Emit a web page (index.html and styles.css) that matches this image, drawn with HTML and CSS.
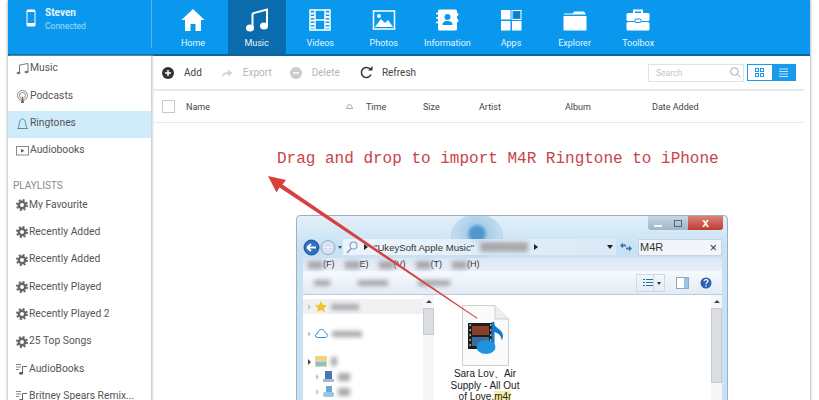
FILE: index.html
```html
<!DOCTYPE html>
<html lang="en">
<head>
    <meta charset="UTF-8">
    <meta name="viewport" content="width=device-width, initial-scale=1.0">
    <title>Ringtones</title>
    <link rel="stylesheet" href="styles.css">
</head>
<body>
    <svg class="defs" width="0" height="0">
        <symbol id="gear" viewBox="0 0 12 12">
            <circle cx="6" cy="6" r="3.200" fill="none" stroke="#666" stroke-width="2.400"/>
            <circle cx="6" cy="6" r="5" fill="none" stroke="#666" stroke-width="2" stroke-dasharray="2 1.930"/>
        </symbol>
        <symbol id="note-list" viewBox="0 0 12 12">
            <path d="M0 1.500h5M0 4h5M0 6.500h3" stroke="#888" fill="none"/>
            <path d="M6.500 3.500H11M6.500 3.500V10" stroke="#666" fill="none"/>
            <ellipse cx="5" cy="10.300" rx="2" ry="1.400" fill="#555"/>
        </symbol>
    </svg>

    <div class="app">
        <!-- Top bar -->
        <header class="topbar">
            <div class="device">
                <svg class="phone" width="10" height="18" viewBox="0 0 10 18"><rect x="0.500" y="0.500" width="9" height="17" rx="1.500" fill="#fff"/><rect x="1.500" y="3" width="7" height="11" fill="#0a98ee"/></svg>
                <div>
                    <div class="device-name">Steven</div>
                    <div class="device-status">Connected</div>
                </div>
            </div>
            <nav class="tabs">
                <div class="tab">
                    <svg width="24" height="24" viewBox="0 0 24 24"><path d="M12 1L0.500 12H4v11h5.500v-7h5v7H20V12h3.500z" fill="#fff"/></svg>
                    <span>Home</span>
                </div>
                <div class="tab active">
                    <svg width="24" height="24" viewBox="0 0 24 24"><path d="M7.500 5.500L22 1.500v16.500" stroke="#fff" stroke-width="2" fill="none"/><path d="M7.500 5.500V20" stroke="#fff" stroke-width="2" fill="none"/><ellipse cx="5" cy="20" rx="4" ry="3.500" fill="#fff"/><ellipse cx="19" cy="18" rx="4" ry="3.500" fill="#fff"/></svg>
                    <span>Music</span>
                </div>
                <div class="tab">
                    <svg width="24" height="24" viewBox="0 0 24 24"><rect x="2" y="2" width="20" height="20" fill="none" stroke="#fff" stroke-width="1.500"/><path d="M7 2v20M17 2v20M7 12h10" stroke="#fff" stroke-width="1.500"/><path d="M2.500 5.500h4M2.500 9h4M2.500 12.500h4M2.500 16h4M2.500 19.500h4M17.500 5.500h4M17.500 9h4M17.500 12.500h4M17.500 16h4M17.500 19.500h4" stroke="#fff" stroke-width="2"/></svg>
                    <span>Videos</span>
                </div>
                <div class="tab">
                    <svg width="24" height="24" viewBox="0 0 24 24"><rect x="1.500" y="3" width="21" height="18" fill="none" stroke="#fff" stroke-width="1.500"/><path d="M3 19l6-8 4 4 3-3 5 7z" fill="#fff"/><circle cx="7" cy="8" r="2" fill="#fff"/></svg>
                    <span>Photos</span>
                </div>
                <div class="tab">
                    <svg width="24" height="24" viewBox="0 0 24 24"><rect x="3" y="1.500" width="19" height="21" rx="1.500" fill="#fff"/><circle cx="12.500" cy="9" r="3" fill="#0a98ee"/><path d="M7.500 17c0-3 2-4 5-4s5 1 5 4z" fill="#0a98ee"/><path d="M1 5.500h3M1 10h3M1 14.500h3" stroke="#fff" stroke-width="1.500"/><path d="M22.500 5v3M22.500 11v3" stroke="#fff" stroke-width="1.500"/></svg>
                    <span>Information</span>
                </div>
                <div class="tab">
                    <svg width="24" height="24" viewBox="0 0 24 24"><rect x="2" y="2" width="9.500" height="9.500" fill="#fff"/><rect x="13" y="2.500" width="9" height="9" fill="none" stroke="#fff"/><rect x="14.500" y="3.500" width="6.500" height="6.500" fill="#0a7fcc"/><rect x="2" y="13" width="9.500" height="9.500" fill="#fff"/><rect x="13" y="13" width="9.500" height="9.500" fill="#fff"/></svg>
                    <span>Apps</span>
                </div>
                <div class="tab">
                    <svg width="24" height="24" viewBox="0 0 24 24"><path d="M1 5.500h8.500l2-2h9.500l2 3H1z" fill="#fff"/><path d="M0.500 8h23v14.500H0.500z" fill="#fff"/></svg>
                    <span>Explorer</span>
                </div>
                <div class="tab">
                    <svg width="24" height="24" viewBox="0 0 24 24"><path d="M8 5V2.500h8V5" fill="none" stroke="#fff" stroke-width="2"/><rect x="0.500" y="5" width="23" height="8" rx="1.500" fill="#fff"/><rect x="0.500" y="14" width="23" height="8.500" rx="1.500" fill="#fff"/><rect x="9" y="11" width="6" height="3.500" rx="1" fill="#fff" stroke="#0a98ee"/></svg>
                    <span>Toolbox</span>
                </div>
            </nav>
        </header>

        <div class="body-row">
            <!-- Sidebar -->
            <aside class="sidebar">
                <div class="side-item">
                    <svg width="13" height="13" viewBox="0 0 13 13"><path d="M3.500 3L12 1.500V10M3.500 3v8" stroke="#777" fill="none"/><ellipse cx="2.500" cy="11" rx="2" ry="1.300" fill="#777"/><ellipse cx="10.500" cy="10" rx="2" ry="1.300" fill="#777"/></svg>
                    <span class="side-label">Music</span>
                </div>
                <div class="side-item">
                    <svg width="13" height="13" viewBox="0 0 13 13"><circle cx="6.500" cy="5.500" r="5" fill="none" stroke="#888"/><circle cx="6.500" cy="5.500" r="3" fill="none" stroke="#888"/><path d="M5 13l1.500-7.500L8 13z" fill="#666"/></svg>
                    <span class="side-label">Podcasts</span>
                </div>
                <div class="side-item selected">
                    <svg width="13" height="13" viewBox="0 0 13 13"><path d="M1.500 11.500c1.500-1 1.500-3 2-6 .4-2.500 1.500-3.500 3-3.500s2.600 1 3 3.500c.5 3 .5 5 2 6z" fill="none" stroke="#5a8a9a"/></svg>
                    <span class="side-label">Ringtones</span>
                </div>
                <div class="side-item">
                    <svg width="13" height="13" viewBox="0 0 13 13"><rect x="0.500" y="2.500" width="12" height="8.500" fill="none" stroke="#888"/><path d="M5 5l3.500 1.800L5 8.500z" fill="#555"/></svg>
                    <span class="side-label">Audiobooks</span>
                </div>
                <div class="side-title">PLAYLISTS</div>
                <div class="side-item"><svg width="12" height="12"><use href="#gear"/></svg><span class="side-label">My Favourite</span></div>
                <div class="side-item"><svg width="12" height="12"><use href="#gear"/></svg><span class="side-label">Recently Added</span></div>
                <div class="side-item"><svg width="12" height="12"><use href="#gear"/></svg><span class="side-label">Recently Added</span></div>
                <div class="side-item"><svg width="12" height="12"><use href="#gear"/></svg><span class="side-label">Recently Played</span></div>
                <div class="side-item"><svg width="12" height="12"><use href="#gear"/></svg><span class="side-label">Recently Played 2</span></div>
                <div class="side-item"><svg width="12" height="12"><use href="#gear"/></svg><span class="side-label">25 Top Songs</span></div>
                <div class="side-item"><svg width="12" height="12"><use href="#note-list"/></svg><span class="side-label">AudioBooks</span></div>
                <div class="side-item"><svg width="12" height="12"><use href="#note-list"/></svg><span class="side-label">Britney Spears Remix...</span></div>
            </aside>

            <!-- Main area -->
            <main class="content">
                <div class="toolbar">
                    <div class="tool">
                        <svg width="12" height="12" viewBox="0 0 12 12"><circle cx="6" cy="6" r="6" fill="#333"/><path d="M6 3v6M3 6h6" stroke="#fff" stroke-width="1.500"/></svg>
                        <span>Add</span>
                    </div>
                    <div class="tool off tool-export">
                        <svg width="12" height="12" viewBox="0 0 12 12"><path d="M1 11c0-4 2-6 6-6V2.500L11.500 6 7 9.500V7c-3 0-4.500 1-6 4z" fill="#d4d4d4"/></svg>
                        <span>Export</span>
                    </div>
                    <div class="tool off tool-delete">
                        <svg width="12" height="12" viewBox="0 0 12 12"><circle cx="6" cy="6" r="6" fill="#ccc"/><path d="M3 6h6" stroke="#fff" stroke-width="1.500"/></svg>
                        <span>Delete</span>
                    </div>
                    <div class="tool tool-refresh">
                        <svg width="13" height="13" viewBox="0 0 13 13"><path d="M11 8.500A5 5 0 1 1 9.800 2.800" fill="none" stroke="#333" stroke-width="1.500"/><path d="M8 4.500h4.500V0z" fill="#333"/></svg>
                        <span>Refresh</span>
                    </div>
                    <div class="search">
                        <span>Search</span>
                        <svg width="11" height="11" viewBox="0 0 11 11"><circle cx="4.500" cy="4.500" r="3.800" fill="none" stroke="#aaa"/><path d="M7.300 7.300L10.500 10.500" stroke="#aaa"/></svg>
                    </div>
                    <div class="view-toggle">
                        <div class="view-btn">
                            <svg width="9" height="9" viewBox="0 0 9 9"><g fill="none" stroke="#1a9ae8"><rect x="0.500" y="0.500" width="3" height="3"/><rect x="5.500" y="0.500" width="3" height="3"/><rect x="0.500" y="5.500" width="3" height="3"/><rect x="5.500" y="5.500" width="3" height="3"/></g></svg>
                        </div>
                        <div class="view-btn on">
                            <svg width="9" height="9" viewBox="0 0 9 9"><path d="M0 1h9M0 3.500h9M0 6h9M0 8.500h9" stroke="#bfe3fa"/></svg>
                        </div>
                    </div>
                </div>
                <div class="table-head">
                    <span class="check"></span>
                    <span class="col col-name">Name</span>
                    <svg class="col-cloud" width="8" height="5" viewBox="0 0 8 5"><path d="M1 4.500h6L6 1.500 4 .5 2 1.500z" fill="none" stroke="#aaa"/></svg>
                    <span class="col col-time">Time</span>
                    <span class="col col-size">Size</span>
                    <span class="col col-artist">Artist</span>
                    <span class="col col-album">Album</span>
                    <span class="col">Date Added</span>
                </div>
                <p class="hint">Drag and drop to import M4R Ringtone to iPhone</p>
            </main>
        </div>
    </div>

    <!-- Explorer window dropped over the app -->
    <div class="win">
        <div class="ghost"></div>
        <div class="win-controls">
            <span class="ctl"><i class="ctl-min"></i></span>
            <span class="ctl"><i class="ctl-max"></i></span>
            <span class="ctl ctl-close">x</span>
        </div>
        <div class="win-address">
            <svg width="34" height="17" viewBox="0 0 34 17"><circle cx="8.500" cy="8.500" r="7.500" fill="#2f6fc0" stroke="#1c4f94"/><path d="M4 8.500h9M4 8.500l4-3.500M4 8.500l4 3.500" stroke="#fff" stroke-width="1.800" fill="none"/><circle cx="25" cy="8.500" r="7" fill="#d5e3f2" stroke="#8ea7c4"/><path d="M21 8.500h8" stroke="#f0f5fa"/></svg>
            <span class="caret"></span>
            <div class="addr-box">
                <svg width="12" height="13" viewBox="0 0 12 13"><circle cx="7.500" cy="4.500" r="3.500" fill="none" stroke="#88a0bd" stroke-width="1.200"/><path d="M5 7.500L1 12" stroke="#88a0bd" stroke-width="1.600"/></svg>
                <span class="addr-arrow"></span>
                <span class="addr-text">"UkeySoft Apple Music"</span>
                <span class="smudge addr-smudge"></span>
                <span class="addr-arrow"></span>
                <span class="addr-drop"></span>
            </div>
            <svg class="addr-refresh" width="12" height="10" viewBox="0 0 12 10"><path d="M0 3.500l3-3v2h3v2H3v2zM12 6.500l-3 3v-2H6v-2h3v-2z" fill="#3c78a8"/></svg>
            <div class="win-search"><span>M4R</span><b>×</b></div>
        </div>
        <div class="win-menu">
            <span><i class="smudge"></i>(F)</span>
            <span><i class="smudge"></i>E)</span>
            <span><i class="smudge"></i>(V)</span>
            <span><i class="smudge"></i>(T)</span>
            <span><i class="smudge"></i>(H)</span>
        </div>
        <div class="win-tools">
            <i class="smudge s-1"></i>
            <i class="smudge s-2"></i>
            <i class="smudge s-3"></i>
            <div class="win-tools-right">
                <div class="viewbtn">
                    <svg width="10" height="9" viewBox="0 0 10 9"><path d="M0 1.500h2M3 1.500h7M0 4.500h2M3 4.500h7M0 7.500h2M3 7.500h7" stroke="#2d6f9c"/></svg>
                    <span class="viewbtn-drop"></span>
                </div>
                <svg width="13" height="12" viewBox="0 0 13 12"><rect x="0.500" y="0.500" width="12" height="11" fill="#fff" stroke="#8ea7c4"/><rect x="8" y="1" width="4" height="10" fill="#9dc3e6"/></svg>
                <svg width="12" height="12" viewBox="0 0 12 12"><circle cx="6" cy="6" r="5.500" fill="#2b5fb3"/><circle cx="6" cy="9" r="0.800" fill="#fff"/><path d="M4 4.300C4 2 8 2 8 4.300 8 5.700 6 5.500 6 7.300" stroke="#fff" stroke-width="1.200" fill="none"/></svg>
            </div>
        </div>
        <div class="win-body">
            <div class="tree">
                <div class="tree-row fav"><span class="tw"></span><svg width="12" height="11" viewBox="0 0 12 11"><path d="M6 0l1.800 3.800 4.200.5-3 2.900.8 3.800L6 9 2.200 11 3 7.200 0 4.300l4.200-.5z" fill="#f2c230"/></svg><i class="smudge tree-s1"></i></div>
                <div class="tree-row cloud"><span class="tw"></span><svg width="13" height="9" viewBox="0 0 13 9"><path d="M2.500 8.500a2 2 0 0 1 0-4C3 2 4.500.5 6.500.5s3.500 1.500 4 3.500a2.300 2.300 0 0 1 0 4.500z" fill="#fff" stroke="#3c86c8"/></svg><i class="smudge tree-s2"></i></div>
                <div class="tree-row lib"><span class="tw open"></span><svg width="12" height="11" viewBox="0 0 12 11"><rect width="12" height="11" rx="1" fill="#e8d68a"/><rect x="1" y="6" width="10" height="4" fill="#7fc3d8"/></svg><i class="smudge tree-s3"></i></div>
                <div class="tree-row sub"><span class="tw"></span><svg width="11" height="11" viewBox="0 0 11 11"><rect x="2" y="0" width="7" height="8" fill="#4a78b5"/><rect x="0" y="8" width="11" height="3" fill="#a8b9cc"/></svg><i class="smudge tree-s4"></i></div>
                <div class="tree-row sub"><span class="tw"></span><svg width="11" height="11" viewBox="0 0 11 11"><rect x="3" y="0" width="6" height="6" fill="#6ba7d8"/><rect x="0" y="6" width="11" height="5" rx="2" fill="#9cc5e0"/></svg><i class="smudge tree-s4"></i></div>
            </div>
            <div class="scroll left-scroll"><i></i></div>
            <div class="files">
                <div class="file">
                    <svg class="file-page" width="47" height="61" viewBox="0 0 47 61">
                        <path d="M.5.500H33L46.500 14v46.500H.5z" fill="#fafafa" stroke="#cfcfcf"/>
                        <path d="M33 .5V14h13.500" fill="#eee" stroke="#cfcfcf"/>
                        <rect x="6" y="18" width="25" height="26" fill="#1d1d1d"/>
                        <rect x="10" y="21" width="17" height="9" fill="#8a3f28"/>
                        <rect x="10" y="32" width="17" height="9" fill="#3a6d9a"/>
                        <path d="M7.500 20h1.500M7.500 25h1.500M7.500 30h1.500M7.500 35h1.500M7.500 40h1.500M28 20h1.500M28 25h1.500M28 30h1.500M28 35h1.500M28 40h1.500" stroke="#ddd" stroke-width="1.500"/>
                        <path d="M31 17v26" stroke="#1578c8" stroke-width="3"/>
                        <path d="M31 17c1 6 10 7 10 14 0 2-1 4-1.500 4.500 .5-5-4-8-8.500-9z" fill="#1578c8"/>
                        <ellipse cx="24" cy="42" rx="9.500" ry="7" fill="#1f93e0"/>
                    </svg>
                    <div class="file-name">Sara Lov、Air Supply - All Out of Love.<mark>m4r</mark></div>
                </div>
            </div>
            <div class="scroll right-scroll"><i></i></div>
        </div>
    </div>

    <!-- Red arrow drawn over everything -->
    <svg class="arrow" width="819" height="400" viewBox="0 0 819 400">
        <path d="M268 176L286 180 282.500 184.500 477.500 318 477 318.800 279.500 187.500 276.500 192.500z" fill="#d8403f"/>
    </svg>
</body>
</html>
```

FILE: styles.css
```css
html, body {
    margin: 0;
    height: 400px;
    overflow: hidden;
    background: #fff;
}
body {
    font-family: Roboto, "Liberation Sans", sans-serif;
    position: relative;
    color: #444;
}
.defs {
    display: block;
    height: 0;
}

.app {
    margin: 0 9px 0 8px;
    height: 420px;
    box-shadow: 0 0 3px #8f8f8f;
    background: #fff;
}

/* Top bar */
.topbar {
    display: flex;
    height: 54px;
    background: #0a98ee;
    border-bottom: 2px solid #0b669f;
}
.device {
    width: 144px;
    height: 48px;
    box-sizing: border-box;
    padding: 9px 0 0 18px;
    display: flex;
    gap: 9px;
    border-right: 1px solid #4eb4f2;
}
.device-name {
    font-size: 10px;
    font-weight: 700;
    line-height: 12px;
    color: #e8f5fe;
    margin-top: -2px;
}
.device-status {
    font-size: 8.500px;
    line-height: 12px;
    margin-top: 1px;
    color: #a9dcfa;
}
.tabs {
    display: flex;
    gap: 5.600px;
    margin-left: 12px;
}
.tab {
    width: 58px;
    display: flex;
    flex-direction: column;
    align-items: center;
    padding-top: 8px;
    box-sizing: border-box;
    color: #e6f5fe;
    font-size: 9px;
}
.tab span {
    margin-top: 4px;
    line-height: 14px;
}
.tab.active {
    background: #0b6cad;
}

.body-row {
    display: flex;
    height: 364px;
}

/* Sidebar */
.sidebar {
    width: 143px;
    flex: none;
    border-right: 1px solid #cfd3d5;
    box-shadow: 1px 0 2px #d8d8d8;
    overflow: hidden;
}
.side-item {
    height: 27.350px;
    display: flex;
    align-items: center;
    gap: 1px;
    padding-left: 8px;
    font-size: 10.300px;
    color: #555;
}
.side-item.selected {
    background: #cfecfb;
}
.side-item svg {
    flex: none;
    margin-top: -2px;
}
/* the app cuts the descenders of its labels off */
.side-label {
    line-height: 13px;
    white-space: nowrap;
    margin-top: -4px;
    clip-path: inset(0 0 1px 0);
}
.side-title {
    font-size: 10px;
    line-height: 13px;
    color: #888;
    padding: 14px 0 0 5px;
    height: 13px;
}

/* Main */
.content {
    flex: 1;
    padding-right: 6px;
    min-width: 0;
}
.toolbar {
    height: 33px;
    display: flex;
    align-items: center;
    border-bottom: 2px solid #e6e8e9;
    padding-left: 10px;
    font-size: 10px;
    color: #444;
}
.tool {
    display: flex;
    align-items: center;
    gap: 10px;
}
.tool.off {
    color: #b5b5b5;
}
.tool-export {
    margin-left: 19px;
}
.tool-delete {
    margin-left: 18px;
}
.tool-refresh {
    margin-left: 20px;
    gap: 9px;
}
.search {
    margin-left: auto;
    width: 96px;
    height: 18px;
    box-sizing: border-box;
    border: 1px solid #dfe3e6;
    padding: 0 2px 0 7px;
    display: flex;
    align-items: center;
    justify-content: space-between;
    font-size: 8.500px;
    color: #c2c6c9;
}
.view-toggle {
    display: flex;
    margin: 0 8px 0 3px;
    height: 17px;
    border: 1px solid #1a9ae8;
    box-sizing: border-box;
}
.view-btn {
    width: 23.500px;
    display: flex;
    align-items: center;
    justify-content: center;
}
.view-btn.on {
    background: #1a9ae8;
}
.table-head {
    height: 31px;
    display: flex;
    align-items: center;
    border-bottom: 1px solid #e6e8e9;
    padding-left: 10px;
    font-size: 9px;
    color: #444;
}
.check {
    width: 11px;
    height: 11px;
    border: 1px solid #c8c8c8;
    flex: none;
}
.col-name {
    margin-left: 11px;
    width: 147px;
}
.col-cloud {
    width: 33px;
    flex: none;
}
.col-time {
    width: 57px;
}
.col-size {
    width: 56px;
}
.col-artist {
    width: 86px;
}
.col-album {
    width: 87px;
}
.hint {
    margin: 25px 0 0 125px;
    font-family: "Liberation Mono", monospace;
    font-size: 16px;
    line-height: 22px;
    color: #c8444a;
    white-space: nowrap;
}

/* Explorer window */
.win {
    position: absolute;
    left: 296px;
    top: 215px;
    width: 432px;
    height: 195px;
    box-sizing: border-box;
    padding: 23px 5px 0 6px;
    border: 1px solid #9cb0c2;
    border-radius: 4px 4px 0 0;
    background: linear-gradient(#e2f0f9, #c8e2f4 30px, #c9e0f2);
    overflow: hidden;
    font-family: "Liberation Sans", sans-serif;
}
.ghost {
    position: absolute;
    left: 154px;
    top: -2px;
    width: 52px;
    height: 44px;
    border-radius: 50%;
    background: radial-gradient(circle at 50% 45%, #4f97cc 0 6px, #a9cfe9 11px, #c2dcf0 24px, #b3d3ea 26px);
}
.win-controls {
    position: absolute;
    right: 4px;
    top: 0;
    display: flex;
    height: 14px;
    border-radius: 0 0 3px 3px;
    overflow: hidden;
}
.ctl {
    width: 20px;
    background: linear-gradient(#c8d6e2, #9fb4c6);
    display: flex;
    align-items: center;
    justify-content: center;
}
.ctl-min {
    width: 8px;
    height: 2px;
    margin-top: 5px;
    background: #f4f7fa;
}
.ctl-max {
    width: 6px;
    height: 5px;
    border: 1px solid #55687a;
}
.ctl-close {
    width: 35px;
    background: linear-gradient(#d9827a, #c23a30);
    color: #fff;
    font-weight: 700;
    font-size: 12px;
    line-height: 11px;
}
.win-address {
    position: relative;
    display: flex;
    align-items: center;
    height: 16px;
    gap: 1px;
}
.caret {
    border-top: 3px solid #2d5f8f;
    border-left: 2px solid transparent;
    border-right: 2px solid transparent;
}
.addr-box {
    width: 273px;
    height: 16px;
    display: flex;
    align-items: center;
    gap: 6px;
    padding: 0 3px;
    box-sizing: border-box;
    background: linear-gradient(90deg, rgba(240, 246, 251, 0.9), rgba(225, 236, 246, 0.7));
    font-size: 9.600px;
    color: #333;
}
.addr-arrow {
    flex: none;
    border-left: 4px solid #222;
    border-top: 3px solid transparent;
    border-bottom: 3px solid transparent;
}
.addr-text {
    white-space: nowrap;
}
.addr-smudge {
    width: 48px;
    height: 10px;
}
.addr-drop {
    margin-left: auto;
    border-top: 4px solid #222;
    border-left: 3px solid transparent;
    border-right: 3px solid transparent;
}
.addr-refresh {
    margin: 0 5px 0 3px;
    flex: none;
}
.win-search {
    flex: 1;
    height: 15px;
    background: #f2f6fa;
    border: 1px solid #c4d4e2;
    display: flex;
    align-items: center;
    justify-content: space-between;
    padding: 0 4px 0 1px;
    font-size: 11px;
    color: #333;
}
.win-search b {
    font-weight: 400;
    font-size: 13px;
}
.win-menu {
    position: relative;
    margin-top: 3px;
    height: 13px;
    display: flex;
    gap: 10px;
    padding-left: 5px;
    background: linear-gradient(#dfe6f3, #e9eef7);
    font-size: 9px;
    line-height: 13px;
    color: #333;
    white-space: nowrap;
}
.win-menu span {
    display: flex;
    align-items: center;
}
.win-menu .smudge {
    width: 15px;
    height: 8px;
}
.smudge {
    display: inline-block;
    background: #a7a9ae;
    filter: blur(2px);
    flex: none;
}
.win-tools {
    height: 23px;
    display: flex;
    align-items: center;
    padding-left: 11px;
    background: linear-gradient(#f7fafd, #e2ebf5);
    border-bottom: 1px solid #b9cfe0;
}
.s-1 {
    width: 16px;
    height: 6px;
}
.s-2 {
    width: 30px;
    height: 6px;
    margin-left: 28px;
}
.s-3 {
    width: 32px;
    height: 6px;
    margin-left: 30px;
}
.win-tools-right {
    margin-left: auto;
    display: flex;
    align-items: center;
    gap: 11px;
    padding-right: 10px;
}
.viewbtn {
    width: 29px;
    height: 18px;
    box-sizing: border-box;
    border: 1px solid #cdd9e4;
    display: flex;
    align-items: center;
    justify-content: space-between;
    padding-left: 6px;
}
.viewbtn-drop {
    border-left: 1px solid #cdd9e4;
    width: 10px;
    height: 16px;
    position: relative;
}
.viewbtn-drop::after {
    content: "";
    position: absolute;
    left: 3px;
    top: 7px;
    border-top: 3px solid #333;
    border-left: 2px solid transparent;
    border-right: 2px solid transparent;
}
.win-body {
    display: flex;
    height: 130px;
    background: #fff;
}
.tree {
    width: 120px;
    padding-top: 4px;
    flex: none;
}
.tree-row {
    display: flex;
    align-items: center;
    gap: 4px;
    height: 13px;
    padding-left: 5px;
}
.tree-row.fav {
    background: #f1f1f2;
    height: 15px;
}
.tree-row.cloud {
    margin-top: 13px;
}
.tree-row.lib {
    margin-top: 15px;
}
.tree-row.sub {
    margin-top: 2px;
    padding-left: 13px;
}
.tw {
    flex: none;
    border-left: 3px solid #c4c8cc;
    border-top: 3px solid transparent;
    border-bottom: 3px solid transparent;
}
.tw.open {
    border-left-color: #444;
}
.tree-s1 {
    width: 28px;
    height: 6px;
}
.tree-s2 {
    width: 30px;
    height: 6px;
}
.tree-s3 {
    width: 6px;
    height: 9px;
}
.tree-s4 {
    width: 12px;
    height: 8px;
}
.scroll {
    width: 11px;
    flex: none;
    background: #f4f6f7;
    padding-top: 13px;
    position: relative;
}
.scroll::before {
    content: "";
    position: absolute;
    left: 3px;
    top: 5px;
    border-bottom: 3px solid #444;
    border-left: 3px solid transparent;
    border-right: 3px solid transparent;
}
.scroll i {
    display: block;
    background: #dcdfe1;
    border: 1px solid #c6cacd;
    box-sizing: border-box;
}
.left-scroll i {
    height: 27px;
}
.right-scroll i {
    height: 75px;
}
.files {
    flex: 1;
    min-width: 0;
    padding: 10px 0 0 15px;
}
.file {
    width: 72px;
    display: flex;
    flex-direction: column;
    align-items: center;
}
.file-name {
    margin-top: 2px;
    font-size: 10px;
    line-height: 11.500px;
    text-align: center;
    color: #222;
    width: 74px;
}
.file-name mark {
    background: #f7f0a0;
    color: #222;
}

.arrow {
    position: absolute;
    left: 0;
    top: 0;
    pointer-events: none;
}
```
